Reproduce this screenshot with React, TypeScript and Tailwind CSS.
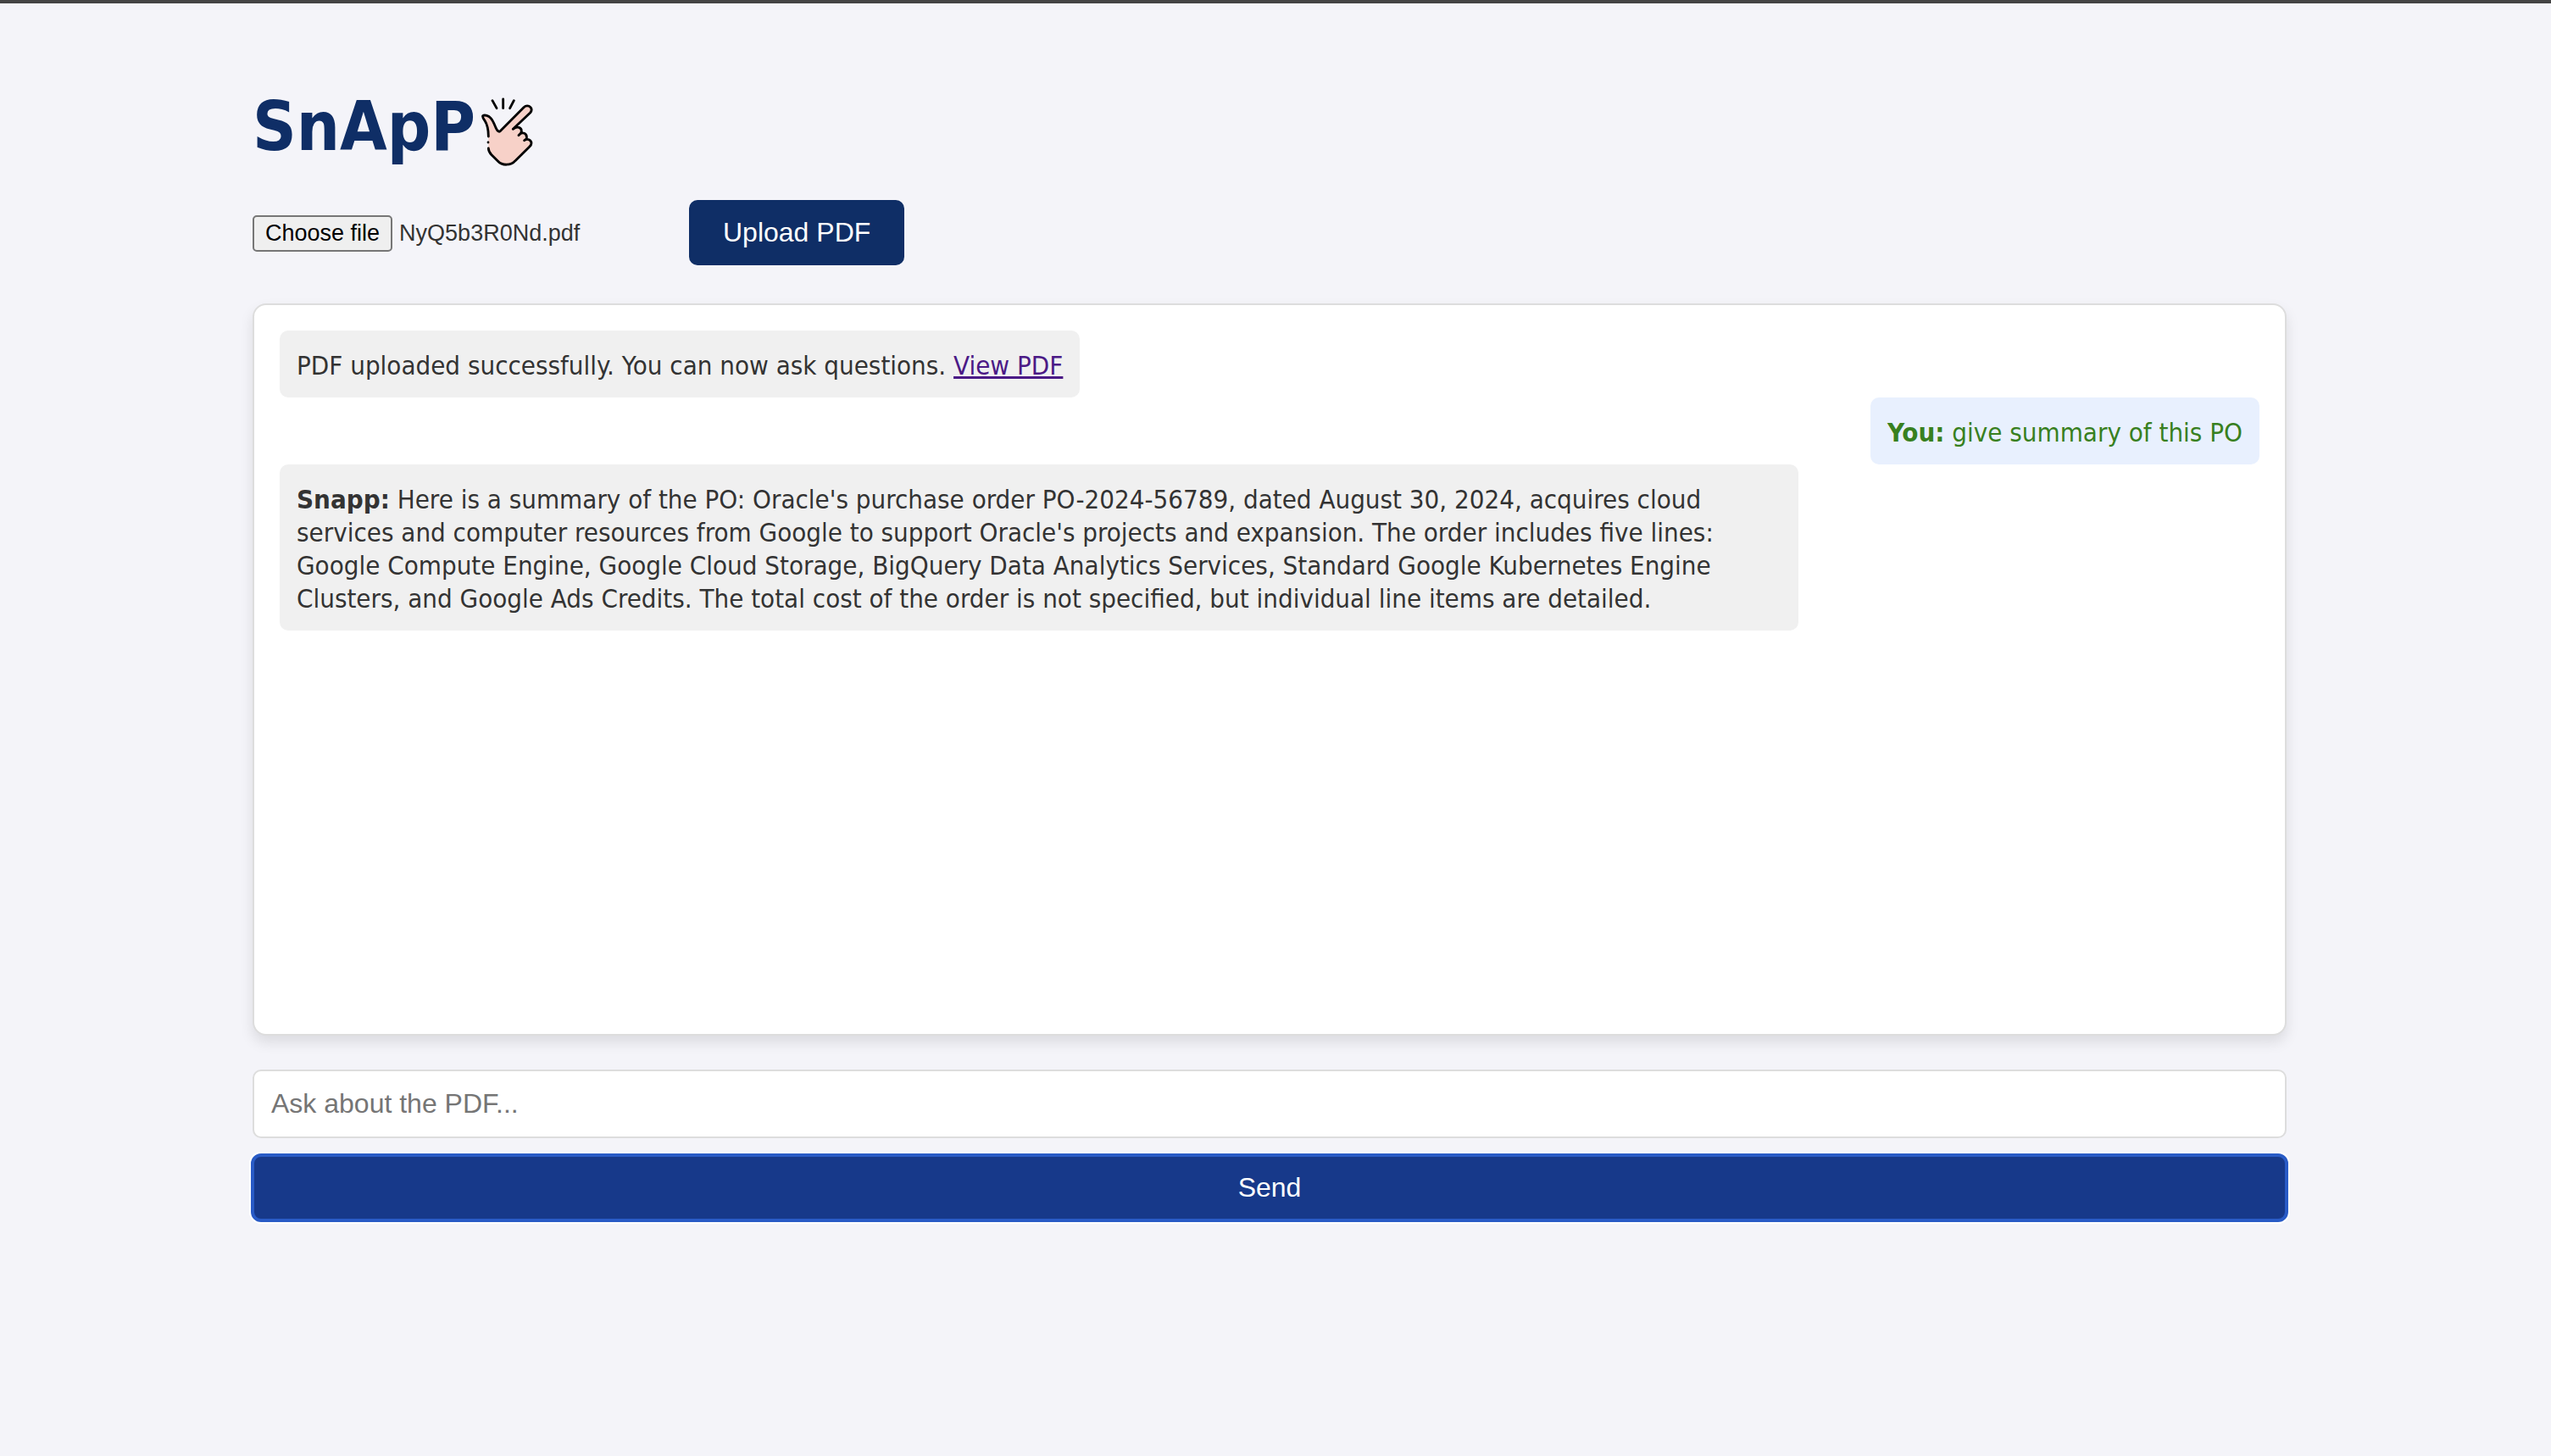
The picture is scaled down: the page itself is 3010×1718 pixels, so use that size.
import React, { useRef, useState } from "react";

function SnapIcon() {
  return (
    <svg viewBox="51 42 186 252" className="mb-2 h-[84px] w-[62px]" fill="none" stroke="#000" strokeWidth="8.5" strokeLinecap="round" strokeLinejoin="round" aria-hidden="true">
      <path
        d="M79 184C79 160 73 138 66 127C61 120 57 113 59 110C66 105 80 110 87 118C97 129 101 144 107 156C110 163 117 169 122 163L204 80C211 73 222 73 228 80C233 86 232 93 227 99L180 147C190 151 195 155 196 164L201 169C211 173 214 181 214 191C224 193 231 199 231 207C231 212 228 216 224 220L174 269C159 287 127 287 112 270L90 248C82 240 78 232 79 224Z"
        fill="#f7d1c8"
        stroke="none"
      />
      <path d="M79 183C79 160 73 138 66 127C61 120 57 113 59 110C66 105 80 110 87 118C97 129 101 144 107 156C110 163 117 169 122 163L204 80C211 73 222 73 228 80C233 86 232 93 227 99L166 157C180 146 196 150 196 164C196 170 191 175 186 179C200 163 216 173 214 189C213 193 209 194 206 197C219 188 231 197 231 207C231 212 228 216 224 220L174 269C159 287 127 287 112 270L90 248C82 240 79 234 79 225M78 204V204.1M93 56L108 83M131 51V83M169 56L155 83" />
    </svg>
  );
}

export default function App() {
  const fileInput = useRef<HTMLInputElement>(null);
  const [fileName, setFileName] = useState("NyQ5b3R0Nd.pdf");
  return (
    <div className="min-h-screen border-t-4 border-[#444444] bg-[#f4f4f9] pr-3.5 font-['DejaVu_Sans_Condensed','DejaVu_Sans',sans-serif] text-[31px] leading-[39px] text-[#333333]">
      <main className="mx-auto max-w-[2400px] pt-[90px]">
        <h1 className="flex items-end gap-1.5 text-[80px] leading-[112px] font-bold text-[#0f2e66]">
          SnApP
          <SnapIcon />
        </h1>

        <div className="mt-[30px] flex items-center font-['Liberation_Sans',Arial,sans-serif]">
          <div className="flex w-[515px] items-center gap-2 pt-0.5 text-[27px] leading-[39px]">
            <input
              ref={fileInput}
              type="file"
              accept="application/pdf"
              aria-label="PDF file"
              className="hidden"
              onChange={(e) => setFileName(e.target.files?.[0]?.name ?? "")}
            />
            <button
              type="button"
              aria-describedby="file-name"
              className="rounded-[5px] border-2 border-[#767676] bg-[#efefef] px-[13px] text-black"
              onClick={() => fileInput.current?.click()}
            >
              Choose file
            </button>
            <span id="file-name">{fileName}</span>
          </div>
          <button type="button" className="rounded-[10px] bg-[#0f2e66] px-10 py-5 text-[32px] leading-[37px] text-white">
            Upload PDF
          </button>
        </div>

        <section className="mt-[45px] flex h-[864px] flex-col items-start overflow-y-auto rounded-2xl border-2 border-[#dddddd] bg-white p-[30px] shadow-[0_8px_16px_rgba(0,0,0,0.1)]">
          <p className="rounded-[10px] bg-[#f0f0f0] px-5 pt-[22px] pb-[18px]">
            PDF uploaded successfully. You can now ask questions.{" "}
            <a href="#pdf" className="text-[#4b1a86] underline">View PDF</a>
          </p>
          <p className="self-end rounded-[10px] bg-[#e8f0fe] px-5 pt-[22px] pb-[18px] text-[#38801f]">
            <strong>You:</strong> give summary of this PO
          </p>
          <p className="max-w-[1792px] rounded-[10px] bg-[#f0f0f0] px-5 pt-[22px] pb-[18px]">
            <strong>Snapp:</strong> Here is a summary of the PO: Oracle's purchase order PO-2024-56789, dated August 30, 2024, acquires cloud services and computer resources from Google to support Oracle's projects and expansion. The order includes five lines: Google Compute Engine, Google Cloud Storage, BigQuery Data Analytics Services, Standard Google Kubernetes Engine Clusters, and Google Ads Credits. The total cost of the order is not specified, but individual line items are detailed.
          </p>
        </section>

        <form className="mt-10 flex flex-col gap-5 font-['Liberation_Sans',Arial,sans-serif] text-[32px]" onSubmit={(e) => e.preventDefault()}>
          <input
            type="text"
            aria-label="Ask about the PDF"
            placeholder="Ask about the PDF..."
            className="rounded-[10px] border-2 border-[#dddddd] bg-white px-5 py-5 leading-[37px] placeholder:text-[#757575]"
          />
          <button type="submit" className="rounded-[10px] bg-[#17398a] py-5 leading-[37px] text-white shadow-[0_0_0_4px_#ffffff] outline-4 -outline-offset-2 outline-[#295bc6]">
            Send
          </button>
        </form>
      </main>
    </div>
  );
}
